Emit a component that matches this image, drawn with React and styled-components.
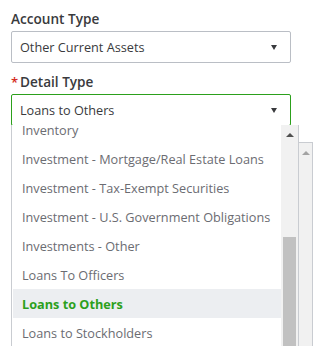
import React from 'react'
import styled, { createGlobalStyle } from 'styled-components'

const GlobalStyle = createGlobalStyle`
    html, body {
        margin: 0;
        padding: 0;
        background: #fff;
    }
    body {
        font-family: 'Open Sans', 'Liberation Sans', sans-serif;
        color: #393a3d;
    }
`
const Page = styled.div`
    position: relative;
    width: 324px;
    height: 346px;
    overflow: hidden;
    display: flex;
`
const Form = styled.div`
    width: 280px;
    padding: 9px 0 0 11px;
    display: flex;
    flex-direction: column;
`
const Field = styled.div`
    position: relative;
    display: flex;
    flex-direction: column;
    margin-bottom: 9px;
`
const Label = styled.label`
    display: flex;
    align-items: baseline;
    height: 22px;
    font-size: 13.6px;
    font-weight: 600;
    color: #393a3d;
`
const Required = styled.span`
    color: #d52b1e;
    font-size: 13px;
    width: 8px;
    margin-right: 1px;
`
const Select = styled.div`
    box-sizing: border-box;
    height: 32px;
    display: flex;
    align-items: center;
    justify-content: space-between;
    padding: 0 13px 0 8px;
    border: 1px solid ${(props) => (props.active ? '#2ca01c' : '#babec5')};
    border-radius: 2px;
    font-size: 12.7px;
    color: #393a3d;
`
const Caret = styled.span`
    width: 0;
    height: 0;
    border-left: 3.5px solid transparent;
    border-right: 3.5px solid transparent;
    border-top: 5px solid #393a3d;
`
const Menu = styled.div`
    position: absolute;
    top: 53px;
    left: 0;
    width: 288px;
    height: 221px;
    box-sizing: border-box;
    display: flex;
    background: #fff;
    border-left: 1px solid #c9ccd1;
    border-right: 1px solid #c9ccd1;
    z-index: 2;
`
const Viewport = styled.div`
    flex: 1;
    overflow: hidden;
`
const Options = styled.ul`
    list-style: none;
    margin: -${(props) => props.offset}px 0 0;
    padding: 0 0 0 1px;
`
const Option = styled.li`
    height: 29px;
    display: flex;
    align-items: center;
    padding-left: 9px;
    font-size: 12.7px;
    white-space: nowrap;
    color: ${(props) => (props.selected ? '#2ca01c' : '#6b6c72')};
    font-weight: ${(props) => (props.selected ? 700 : 400)};
    background: ${(props) => (props.selected ? '#eceef1' : 'transparent')};
`
const Scrollbar = styled.div`
    width: ${(props) => props.width}px;
    box-sizing: border-box;
    display: flex;
    flex-direction: column;
    align-items: center;
    background: #f1f1f1;
    border-left: ${(props) => (props.bordered ? '1px solid #c9ccd1' : 'none')};
    border-right: ${(props) => (props.bordered ? '1px solid #c9ccd1' : 'none')};
    border-top: ${(props) => (props.bordered ? '1px solid #c9ccd1' : 'none')};
`
const ScrollArrow = styled.span`
    margin: 8px 0 0;
    width: 0;
    height: 0;
    border-left: 4px solid transparent;
    border-right: 4px solid transparent;
    border-bottom: 4px solid ${(props) => props.color};
`
const Thumb = styled.div`
    width: 13px;
    margin-top: auto;
    height: ${(props) => props.size}px;
    background: #c1c1c1;
`
const Side = styled.div`
    display: flex;
    padding: 142px 0 0 7px;
`

// only the rows in view; the list is scrolled 10px into "Inventory"
const options = [
    'Inventory',
    'Investment - Mortgage/Real Estate Loans',
    'Investment - Tax-Exempt Securities',
    'Investment - U.S. Government Obligations',
    'Investments - Other',
    'Loans To Officers',
    'Loans to Others',
    'Loans to Stockholders',
]

const App = () => (
    <Page>
        <GlobalStyle />
        <Form>
            <Field>
                <Label>Account Type</Label>
                <Select>
                    <span>Other Current Assets</span>
                    <Caret />
                </Select>
            </Field>
            <Field>
                <Label>
                    <Required>*</Required>Detail Type
                </Label>
                <Select active>
                    <span>Loans to Others</span>
                    <Caret />
                </Select>
                <Menu>
                    <Viewport>
                        <Options offset={10}>
                            {options.map((name) => (
                                <Option key={name} selected={name === 'Loans to Others'}>
                                    {name}
                                </Option>
                            ))}
                        </Options>
                    </Viewport>
                    <Scrollbar width={17}>
                        <ScrollArrow color="#505050" />
                        <Thumb size={109} />
                    </Scrollbar>
                </Menu>
            </Field>
        </Form>
        <Side>
            <Scrollbar width={15} bordered>
                <ScrollArrow color="#a3a3a3" />
            </Scrollbar>
        </Side>
    </Page>
)

export default App
